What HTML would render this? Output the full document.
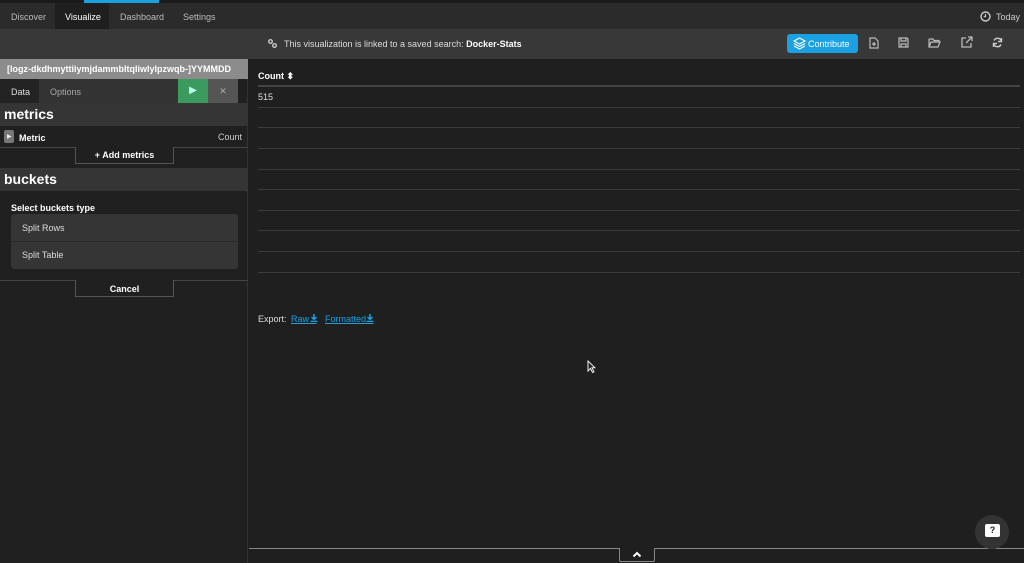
<!DOCTYPE html>
<html><head><style>
*{box-sizing:border-box;margin:0;padding:0}
body{width:1024px;height:563px;background:#1f1f1f;font-family:"Liberation Sans",sans-serif;color:#ddd;font-size:9px;position:relative;overflow:hidden}
.abs{position:absolute}
#nav{left:0;top:0;width:1024px;height:29px;background:#2b2b2b;border-top:3px solid #1a1a1a}
#nav span{position:absolute;top:9px;font-size:9px;color:#bbb}
#bar2{left:0;top:29px;width:1024px;height:30px;background:#383838}
#left{left:0;top:59px;width:248px;height:504px;background:#202020;border-right:1px solid #333}
.row{position:absolute;left:258px;width:762px;height:1px;background:#3a3a3a}
svg{position:absolute}
</style></head><body>
<div id="nav" class="abs">
<div class="abs" style="left:84px;top:-3px;width:75px;height:3px;background:#1ba1e2"></div>
<div class="abs" style="left:55px;top:0;width:54px;height:26px;background:#1f1f1f"></div>
<span style="left:11px">Discover</span>
<span style="left:65px;color:#fff">Visualize</span>
<span style="left:120px">Dashboard</span>
<span style="left:183px">Settings</span>
<svg style="left:980px;top:8px" width="11" height="11" viewBox="0 0 11 11"><circle cx="5.5" cy="5.5" r="4.5" fill="none" stroke="#ccc" stroke-width="1.4"/><path d="M5.5 3v2.7h-1.8" fill="none" stroke="#ccc" stroke-width="1.2"/></svg>
<span style="left:996px;color:#ccc">Today</span>
</div>
<div id="bar2" class="abs">
<svg style="left:268px;top:10px" width="9" height="9" viewBox="0 0 9 9"><circle cx="2.5" cy="2.5" r="1.8" fill="none" stroke="#ddd" stroke-width="1.2"/><circle cx="6.5" cy="6.5" r="1.8" fill="none" stroke="#ddd" stroke-width="1.2"/></svg>
<span class="abs" style="left:284px;top:10px;font-size:9px;color:#ddd">This visualization is linked to a saved search: <b style="color:#fff">Docker-Stats</b></span>
<div class="abs" style="left:787px;top:5px;width:71px;height:19px;background:#1ba1e2;border-radius:3px;color:#fff;font-size:9px;padding:5px 0 0 21px">Contribute</div>
<svg style="left:793px;top:8px" width="13" height="13" viewBox="0 0 13 13"><path d="M6.5 1L12 4 6.5 7 1 4z M1 6.5l5.5 3 5.5-3 M1 9l5.5 3 5.5-3" fill="none" stroke="#fff" stroke-width="1.1"/></svg>
<svg style="left:869px;top:8px" width="10" height="12" viewBox="0 0 10 12"><path d="M1 1h5l3 3v7H1z M3 7h4 M5 5v4" fill="none" stroke="#bbb" stroke-width="1.2"/></svg>
<svg style="left:898px;top:8px" width="11" height="11" viewBox="0 0 11 11"><path d="M1 1h8l1 1v8H1z M3 1v3h5V1 M3 10V7h5v3" fill="none" stroke="#bbb" stroke-width="1.2"/></svg>
<svg style="left:928px;top:9px" width="13" height="10" viewBox="0 0 13 10"><path d="M1 1h4l1 1.5h5V4 M1 1v8h9l2-5H3L1 9" fill="none" stroke="#bbb" stroke-width="1.2"/></svg>
<svg style="left:961px;top:7px" width="12" height="12" viewBox="0 0 12 12"><path d="M5 2H1v9h9V7 M7 1h4v4 M11 1L5 7" fill="none" stroke="#bbb" stroke-width="1.3"/></svg>
<svg style="left:992px;top:8px" width="11" height="11" viewBox="0 0 11 11"><path d="M9.5 4.5A4 4 0 0 0 2 3.5 M1.5 6.5A4 4 0 0 0 9 7.5 M9.5 1v3.5H6 M1.5 10V6.5H5" fill="none" stroke="#ccc" stroke-width="1.4"/></svg>
</div>
<div id="left" class="abs">
<div class="abs" style="left:0;top:0;width:248px;height:20px;background:#8c8c8c;color:#fff;font-weight:bold;font-size:9px;padding:5px 0 0 7px">[logz-dkdhmyttiiymjdammbltqliwlylpzwqb-]YYMMDD</div>
<div class="abs" style="left:0;top:20px;width:238px;height:24px;background:#333"></div>
<div class="abs" style="left:0;top:20px;width:39px;height:24px;background:#232323;padding:8px 0 0 11px;color:#ddd">Data</div>
<span class="abs" style="left:50px;top:28px;color:#aaa">Options</span>
<div class="abs" style="left:178px;top:20px;width:30px;height:24px;background:#3b9a5e;color:#bfe;font-size:10px;text-align:center;padding-top:6px">▶</div>
<div class="abs" style="left:208px;top:20px;width:30px;height:24px;background:#555;color:#aaa;text-align:center;padding-top:7px">✕</div>
<div class="abs" style="left:0;top:44px;width:248px;height:23px;background:#353535;color:#fff;font-weight:bold;font-size:14px;padding:3px 0 0 4px">metrics</div>
<div class="abs" style="left:4px;top:71px;width:10px;height:13px;background:#777;border-radius:2px;color:#eee;font-size:6px;padding:3px 0 0 3px">▶</div>
<span class="abs" style="left:19px;top:74px;color:#fff;font-weight:bold">Metric</span>
<span class="abs" style="left:218px;top:73px;color:#ccc">Count</span>
<div class="abs" style="left:0;top:88px;width:248px;height:1px;background:#444"></div>
<div class="abs" style="left:75px;top:88px;width:99px;height:17px;border:1px solid #555;border-top:none;background:#202020;text-align:center;padding-top:3px;color:#fff;font-weight:bold">+ Add metrics</div>
<div class="abs" style="left:0;top:109px;width:248px;height:23px;background:#353535;color:#fff;font-weight:bold;font-size:14px;padding:3px 0 0 4px">buckets</div>
<span class="abs" style="left:11px;top:144px;color:#fff;font-weight:bold">Select buckets type</span>
<div class="abs" style="left:11px;top:155px;width:227px;height:55px;background:#353535;border-radius:3px"></div>
<div class="abs" style="left:11px;top:182px;width:227px;height:1px;background:#2b2b2b"></div>
<span class="abs" style="left:22px;top:164px;color:#ddd">Split Rows</span>
<span class="abs" style="left:22px;top:191px;color:#ddd">Split Table</span>
<div class="abs" style="left:0;top:221px;width:248px;height:1px;background:#444"></div>
<div class="abs" style="left:75px;top:221px;width:99px;height:17px;border:1px solid #555;border-top:none;background:#202020;text-align:center;padding-top:4px;color:#fff;font-weight:bold">Cancel</div>
</div>
<span class="abs" style="left:258px;top:71px;color:#fff;font-weight:bold">Count ⬍</span>
<div class="row" style="top:85px;height:2px;background:#444"></div>
<span class="abs" style="left:258px;top:92px;color:#ddd">515</span>
<div class="row" style="top:107px"></div>
<div class="row" style="top:127px"></div>
<div class="row" style="top:148px"></div>
<div class="row" style="top:169px"></div>
<div class="row" style="top:189px"></div>
<div class="row" style="top:210px"></div>
<div class="row" style="top:230px"></div>
<div class="row" style="top:251px"></div>
<div class="row" style="top:272px"></div>
<span class="abs" style="left:258px;top:314px;color:#ddd">Export:</span>
<span class="abs" style="left:291px;top:314px;color:#1ba1e2;text-decoration:underline">Raw&nbsp;&nbsp;&nbsp;</span>
<svg style="left:310px;top:314px" width="8" height="8" viewBox="0 0 8 8"><path d="M4 0v5 M1.5 3L4 5.5 6.5 3 M0.5 7.5h7" fill="none" stroke="#1ba1e2" stroke-width="1.5"/></svg>
<span class="abs" style="left:325px;top:314px;color:#1ba1e2;text-decoration:underline">Formatted&nbsp;&nbsp;&nbsp;</span>
<svg style="left:366px;top:314px" width="8" height="8" viewBox="0 0 8 8"><path d="M4 0v5 M1.5 3L4 5.5 6.5 3 M0.5 7.5h7" fill="none" stroke="#1ba1e2" stroke-width="1.5"/></svg>
<svg style="left:587px;top:360px" width="9" height="13" viewBox="0 0 9 13"><path d="M1 1v10l2.5-2.5 2 4 1.5-.7-2-4H8z" fill="#222" stroke="#eee" stroke-width="1"/></svg>
<div class="abs" style="left:249px;top:548px;width:775px;height:1px;background:#888"></div>
<div class="abs" style="left:619px;top:548px;width:36px;height:14px;background:#1f1f1f;border:1px solid #888;border-top:none;border-radius:0 0 2px 2px"></div>
<svg style="left:632px;top:551px" width="10" height="7" viewBox="0 0 10 7"><path d="M1.5 5.5L5 2l3.5 3.5" fill="none" stroke="#fff" stroke-width="2"/></svg>
<div class="abs" style="left:975px;top:515px;width:34px;height:34px;border-radius:50%;background:#333"></div>
<div class="abs" style="left:985px;top:524px;width:15px;height:13px;background:#fff;border-radius:2px;color:#222;font-size:9px;font-weight:bold;text-align:center;line-height:13px">?</div>
</body></html>
